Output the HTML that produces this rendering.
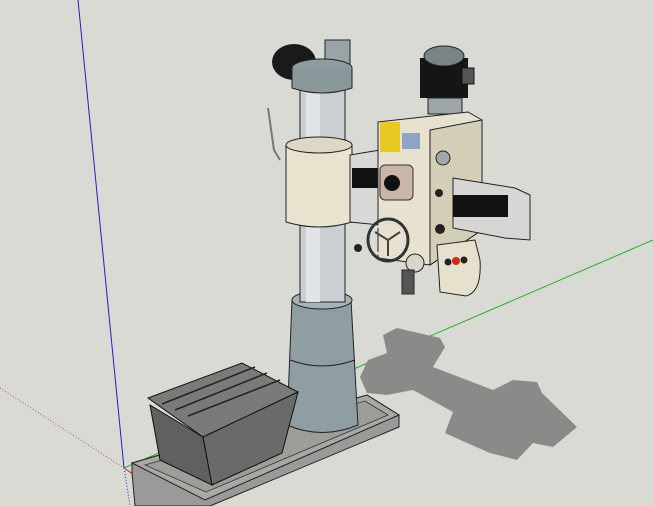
<!DOCTYPE html><html><head><style>body{margin:0;background:#dadad5;}svg{display:block}</style></head><body>
<svg width="653" height="506" viewBox="0 0 653 506" xmlns="http://www.w3.org/2000/svg">
<rect width="653" height="506" fill="#dadad5"/>
<line x1="78" y1="0" x2="124" y2="468" stroke="#2020c0" stroke-width="1"/>
<line x1="124" y1="468" x2="130" y2="506" stroke="#2020c0" stroke-width="1" stroke-dasharray="1,2"/>
<line x1="0" y1="388" x2="124" y2="468" stroke="#d05050" stroke-width="1" stroke-dasharray="1,2"/>
<line x1="124" y1="468" x2="180" y2="506" stroke="#d02020" stroke-width="1"/>
<line x1="124" y1="468" x2="653" y2="240" stroke="#20b020" stroke-width="1"/>
<!-- shadow -->
<path d="M383,335 L397,328 L440,338 L445,347 L433,367 L493,390 L513,380 L537,382 L542,393 L577,427 L553,447 L533,443 L517,460 L490,453 L467,443 L445,433 L453,412 L413,390 L387,395 L367,393 L360,377 L368,360 L387,353 Z" fill="#8a8a88"/>
<!-- base plate -->
<path d="M132,463 L367,395 L399,415 L399,427 L210,506 L135,506 L132,473 Z" fill="#9a9a98" stroke="#222" stroke-width="1"/>
<path d="M132,463 L367,395 L399,415 L205,500 Z" fill="#a8a8a5" stroke="#222" stroke-width="1"/>
<path d="M145,465 L365,401 L388,415 L206,492 Z" fill="#9d9d9a" stroke="#333" stroke-width="0.8"/>
<!-- column base cone -->
<path d="M292,300 L351,300 L358,425 Q322,440 287,425 Z" fill="#8f9ea3" stroke="#222"/>
<path d="M290,360 Q322,372 355,360" fill="none" stroke="#222"/>
<ellipse cx="322" cy="300" rx="30" ry="9" fill="#a6b3b7" stroke="#222"/>
<!-- table -->
<path d="M148,398 L242,363 L298,392 L203,437 Z" fill="#7a7a78" stroke="#111"/>
<path d="M150,405 L203,437 L212,485 L160,460 Z" fill="#606060" stroke="#111"/>
<path d="M203,437 L298,392 L282,453 L212,485 Z" fill="#6a6a68" stroke="#111"/>
<path d="M162,404 L255,367 M175,410 L267,373 M188,416 L280,380" stroke="#222" stroke-width="1.5"/>
<!-- column upper -->
<rect x="300" y="90" width="45" height="212" fill="#c9cfd2" stroke="#222"/>
<rect x="306" y="90" width="14" height="212" fill="#e0e4e6"/>
<!-- top motor -->
<ellipse cx="294" cy="62" rx="22" ry="18" fill="#1a1a1a"/>
<rect x="325" y="40" width="25" height="25" fill="#9aa4a8" stroke="#222"/>
<ellipse cx="322" cy="68" rx="30" ry="9" fill="#8f9ca0" stroke="#222"/>
<path d="M292,68 L292,88 Q322,98 352,88 L352,68" fill="#8a979b" stroke="#222"/>
<!-- sleeve -->
<path d="M286,145 L352,145 L352,222 Q319,232 286,222 Z" fill="#e9e3d0" stroke="#222"/>
<ellipse cx="319" cy="145" rx="33" ry="8" fill="#ddd7c3" stroke="#222"/>
<path d="M268,108 L274,150 L280,160" fill="none" stroke="#777" stroke-width="2"/>
<!-- left arm -->
<path d="M350,155 L380,150 L380,225 L350,222 Z" fill="#d8d8d6" stroke="#222"/>
<rect x="352" y="168" width="28" height="20" fill="#111"/>
<!-- head motor -->
<rect x="420" y="58" width="48" height="40" fill="#151515"/>
<ellipse cx="444" cy="56" rx="20" ry="10" fill="#7b8588" stroke="#222"/>
<rect x="462" y="68" width="12" height="16" fill="#555" stroke="#111"/>
<rect x="428" y="98" width="34" height="16" fill="#9ca6a9" stroke="#222"/>
<!-- head box -->
<path d="M378,122 L468,112 L482,120 L482,230 L430,265 L378,258 Z" fill="#e7e1cd" stroke="#222"/>
<path d="M430,130 L482,120 L482,230 L430,265 Z" fill="#d4cdb8" stroke="#222"/>
<rect x="380" y="122" width="20" height="30" fill="#e8c823"/>
<rect x="402" y="133" width="18" height="16" fill="#8ea3c8"/>
<rect x="380" y="165" width="33" height="35" rx="5" fill="#c9b6a6" stroke="#333"/>
<circle cx="392" cy="183" r="8" fill="#111"/>
<circle cx="443" cy="158" r="7" fill="#a0a8aa" stroke="#222"/>
<circle cx="439" cy="193" r="4" fill="#222"/>
<circle cx="440" cy="229" r="5" fill="#222"/>
<!-- right arm -->
<path d="M453,178 L515,188 L530,195 L530,240 L505,238 L453,228 Z" fill="#d6d6d4" stroke="#222"/>
<rect x="453" y="195" width="55" height="22" fill="#111"/>
<!-- handwheel -->
<ellipse cx="388" cy="240" rx="20" ry="21" fill="none" stroke="#333" stroke-width="3"/>
<ellipse cx="388" cy="240" rx="16" ry="17" fill="none" stroke="#ddd" stroke-width="2"/>
<path d="M388,240 L375,232 M388,240 L400,232 M388,240 L388,256" stroke="#444" stroke-width="2"/>
<circle cx="358" cy="248" r="4" fill="#222"/>
<circle cx="415" cy="263" r="9" fill="#d8d5ca" stroke="#222"/>
<rect x="402" y="270" width="12" height="24" fill="#555" stroke="#222"/>
<!-- control box -->
<path d="M437,245 L475,240 L480,260 Q482,292 466,296 L440,292 Z" fill="#e6e0cc" stroke="#222"/>
<circle cx="448" cy="262" r="3.5" fill="#222"/>
<circle cx="456" cy="261" r="4" fill="#d02a10"/>
<circle cx="464" cy="260" r="3.5" fill="#222"/>
</svg>
</body></html>
